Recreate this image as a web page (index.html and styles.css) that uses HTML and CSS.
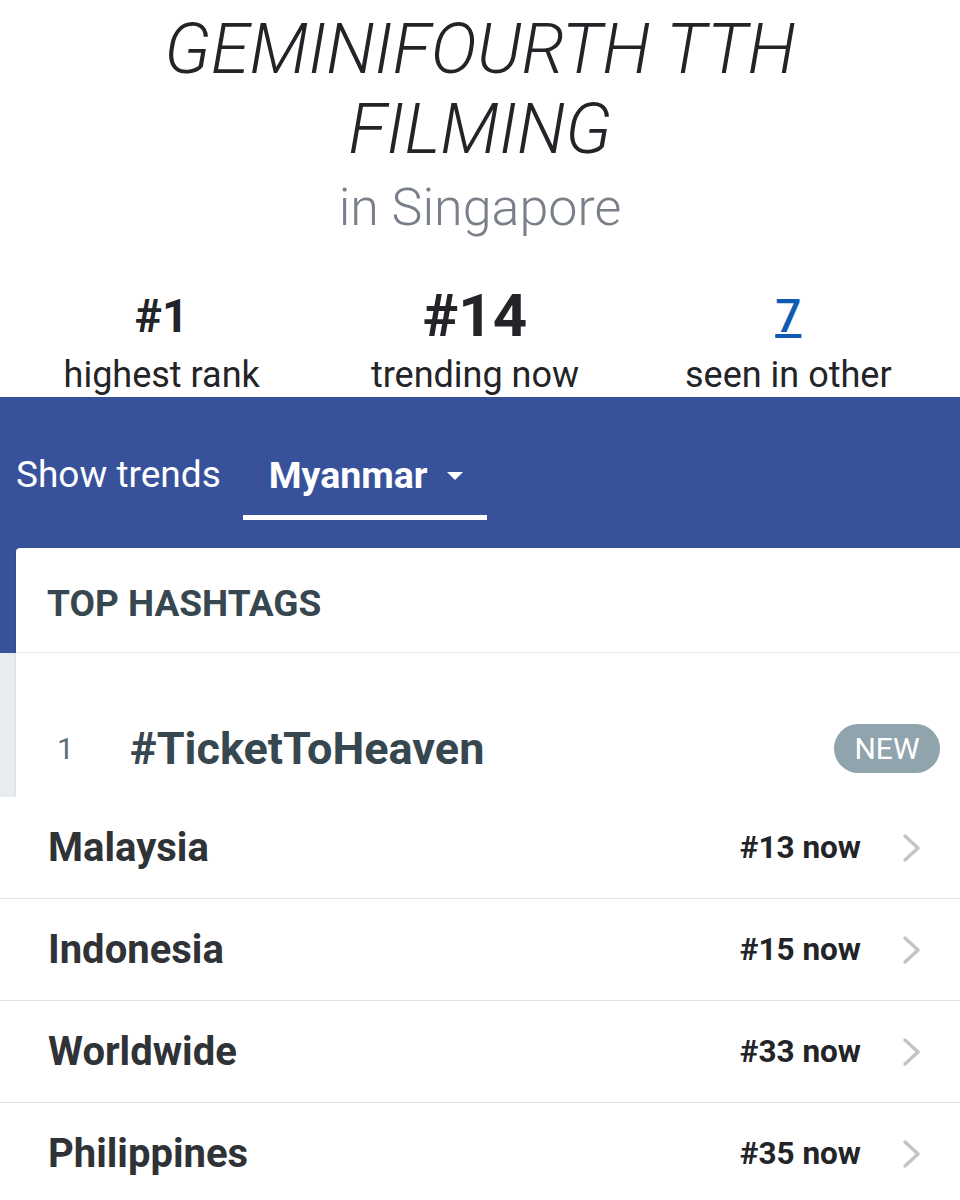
FILE: index.html
```html
<!DOCTYPE html>
<html lang="en">

<head>
    <meta charset="UTF-8">
    <title>GEMINIFOURTH TTH FILMING in Singapore</title>
    <link rel="stylesheet" href="styles.css">
</head>

<body>
    <div class="trend-head">
        <h1 class="trend-title">GEMINIFOURTH TTH FILMING</h1>
        <p class="trend-place">in Singapore</p>
    </div>

    <div class="stats">
        <div class="stat">
            <div class="stat-num">#1</div>
            <div class="stat-label">highest rank</div>
        </div>
        <div class="stat">
            <div class="stat-num big">#14</div>
            <div class="stat-label">trending now</div>
        </div>
        <div class="stat">
            <div class="stat-num"><a href="#" class="stat-link">7</a></div>
            <div class="stat-label">seen in other</div>
        </div>
    </div>

    <div class="main">
        <div class="nav">
            <span class="nav-label">Show trends</span>
            <span class="nav-tab">Myanmar <span class="caret"></span></span>
        </div>

        <div class="card">
            <div class="card-head">TOP HASHTAGS</div>
            <div class="tag-row">
                <span class="tag-rank">1</span>
                <span class="tag-name">#TicketToHeaven</span>
                <span class="badge">NEW</span>
            </div>
        </div>
    </div>

    <ul class="others">
        <li class="other">
            <span class="other-name">Malaysia</span>
            <span class="other-rank">#13 now</span>
            <svg class="chev" width="20" height="30" viewBox="0 0 20 30"><path d="M3 3 L16 15 L3 27" /></svg>
        </li>
        <li class="other">
            <span class="other-name">Indonesia</span>
            <span class="other-rank">#15 now</span>
            <svg class="chev" width="20" height="30" viewBox="0 0 20 30"><path d="M3 3 L16 15 L3 27" /></svg>
        </li>
        <li class="other">
            <span class="other-name">Worldwide</span>
            <span class="other-rank">#33 now</span>
            <svg class="chev" width="20" height="30" viewBox="0 0 20 30"><path d="M3 3 L16 15 L3 27" /></svg>
        </li>
        <li class="other">
            <span class="other-name">Philippines</span>
            <span class="other-rank">#35 now</span>
            <svg class="chev" width="20" height="30" viewBox="0 0 20 30"><path d="M3 3 L16 15 L3 27" /></svg>
        </li>
    </ul>
</body>

</html>
```

FILE: styles.css
```css
/* page */
body {
    margin: 0;
    font-family: Roboto, "Liberation Sans", sans-serif;
    color: #222428;
    background: #fff;
    overflow: hidden;
}

/* title */
.trend-head {
    padding-top: 9px;
    text-align: center;
}

.trend-title {
    margin: 0 auto;
    max-width: 720px;
    font-size: 70px;
    line-height: 80px;
    font-weight: 300;
    font-style: italic;
    color: #222428;
}

.trend-place {
    margin: 9px 0 0;
    font-size: 52px;
    line-height: 60px;
    font-weight: 300;
    color: #7a8089;
}

/* stats */
.stats {
    display: flex;
    margin-top: 48px;
    padding: 0 15px 0 5px;
}

.stat {
    flex: 1;
    display: flex;
    flex-direction: column;
    align-items: center;
}

.stat-num {
    height: 60px;
    font-size: 46px;
    line-height: 60px;
    font-weight: 700;
    color: #222428;
}

.stat-num.big {
    font-size: 60px;
}

.stat-link {
    color: #0f5bb3;
    font-weight: 500;
    text-decoration: underline;
    text-decoration-thickness: 4px;
    text-underline-offset: 2px;
}

.stat-label {
    margin-top: 7px;
    font-size: 36px;
    line-height: 44px;
    color: #222428;
}

/* blue band + card */
.main {
    background: linear-gradient(to bottom, #37529a 256px, #e9ecef 256px);
    padding-top: 56px;
}

.nav {
    display: flex;
    align-items: flex-start;
    padding-left: 16px;
    color: #fff;
}

.nav-label {
    font-size: 37px;
    line-height: 44px;
    margin-right: 22px;
}

.nav-tab {
    display: flex;
    align-items: center;
    padding: 0 24px 18px 26px;
    border-bottom: 5px solid #fff;
    font-size: 37.5px;
    line-height: 44px;
    font-weight: 700;
}

.caret {
    width: 0;
    height: 0;
    margin-left: 19px;
    margin-top: 2px;
    border-left: 8px solid transparent;
    border-right: 8px solid transparent;
    border-top: 8px solid #fff;
}

.card {
    margin: 28px 0 0 16px;
    background: #fff;
    border-radius: 4px 0 0 0;
    box-shadow: 0 0 2px rgba(0, 0, 0, 0.18);
}

.card-head {
    padding: 36px 30px 28px 31px;
    font-size: 37px;
    line-height: 40px;
    font-weight: 700;
    color: #37474f;
    border-bottom: 1px solid #e3e6e9;
}

.tag-row {
    display: flex;
    align-items: center;
    padding: 71px 20px 24px 41px;
}

.tag-rank {
    width: 73px;
    font-size: 30px;
    line-height: 49px;
    color: #546e7a;
}

.tag-name {
    flex: 1;
    font-size: 45px;
    line-height: 49px;
    font-weight: 700;
    color: #37474f;
}

.badge {
    width: 106px;
    height: 49px;
    border-radius: 25px;
    background: #90a4ae;
    color: #fff;
    font-size: 30px;
    line-height: 49px;
    text-align: center;
}

/* other countries */
.others {
    list-style: none;
    margin: 0;
    padding: 0;
    background: #fff;
}

.other {
    display: flex;
    align-items: center;
    height: 101px;
    padding: 0 38px 0 48px;
    border-bottom: 1px solid #dfe2e5;
}

.other-name {
    flex: 1;
    font-size: 40px;
    line-height: 48px;
    font-weight: 700;
    color: #2f3236;
}

.other-rank {
    margin-right: 41px;
    font-size: 31.5px;
    font-weight: 700;
    color: #222428;
}

.chev path {
    fill: none;
    stroke: #c4c4c4;
    stroke-width: 3.5;
    stroke-linecap: round;
    stroke-linejoin: round;
}
```
